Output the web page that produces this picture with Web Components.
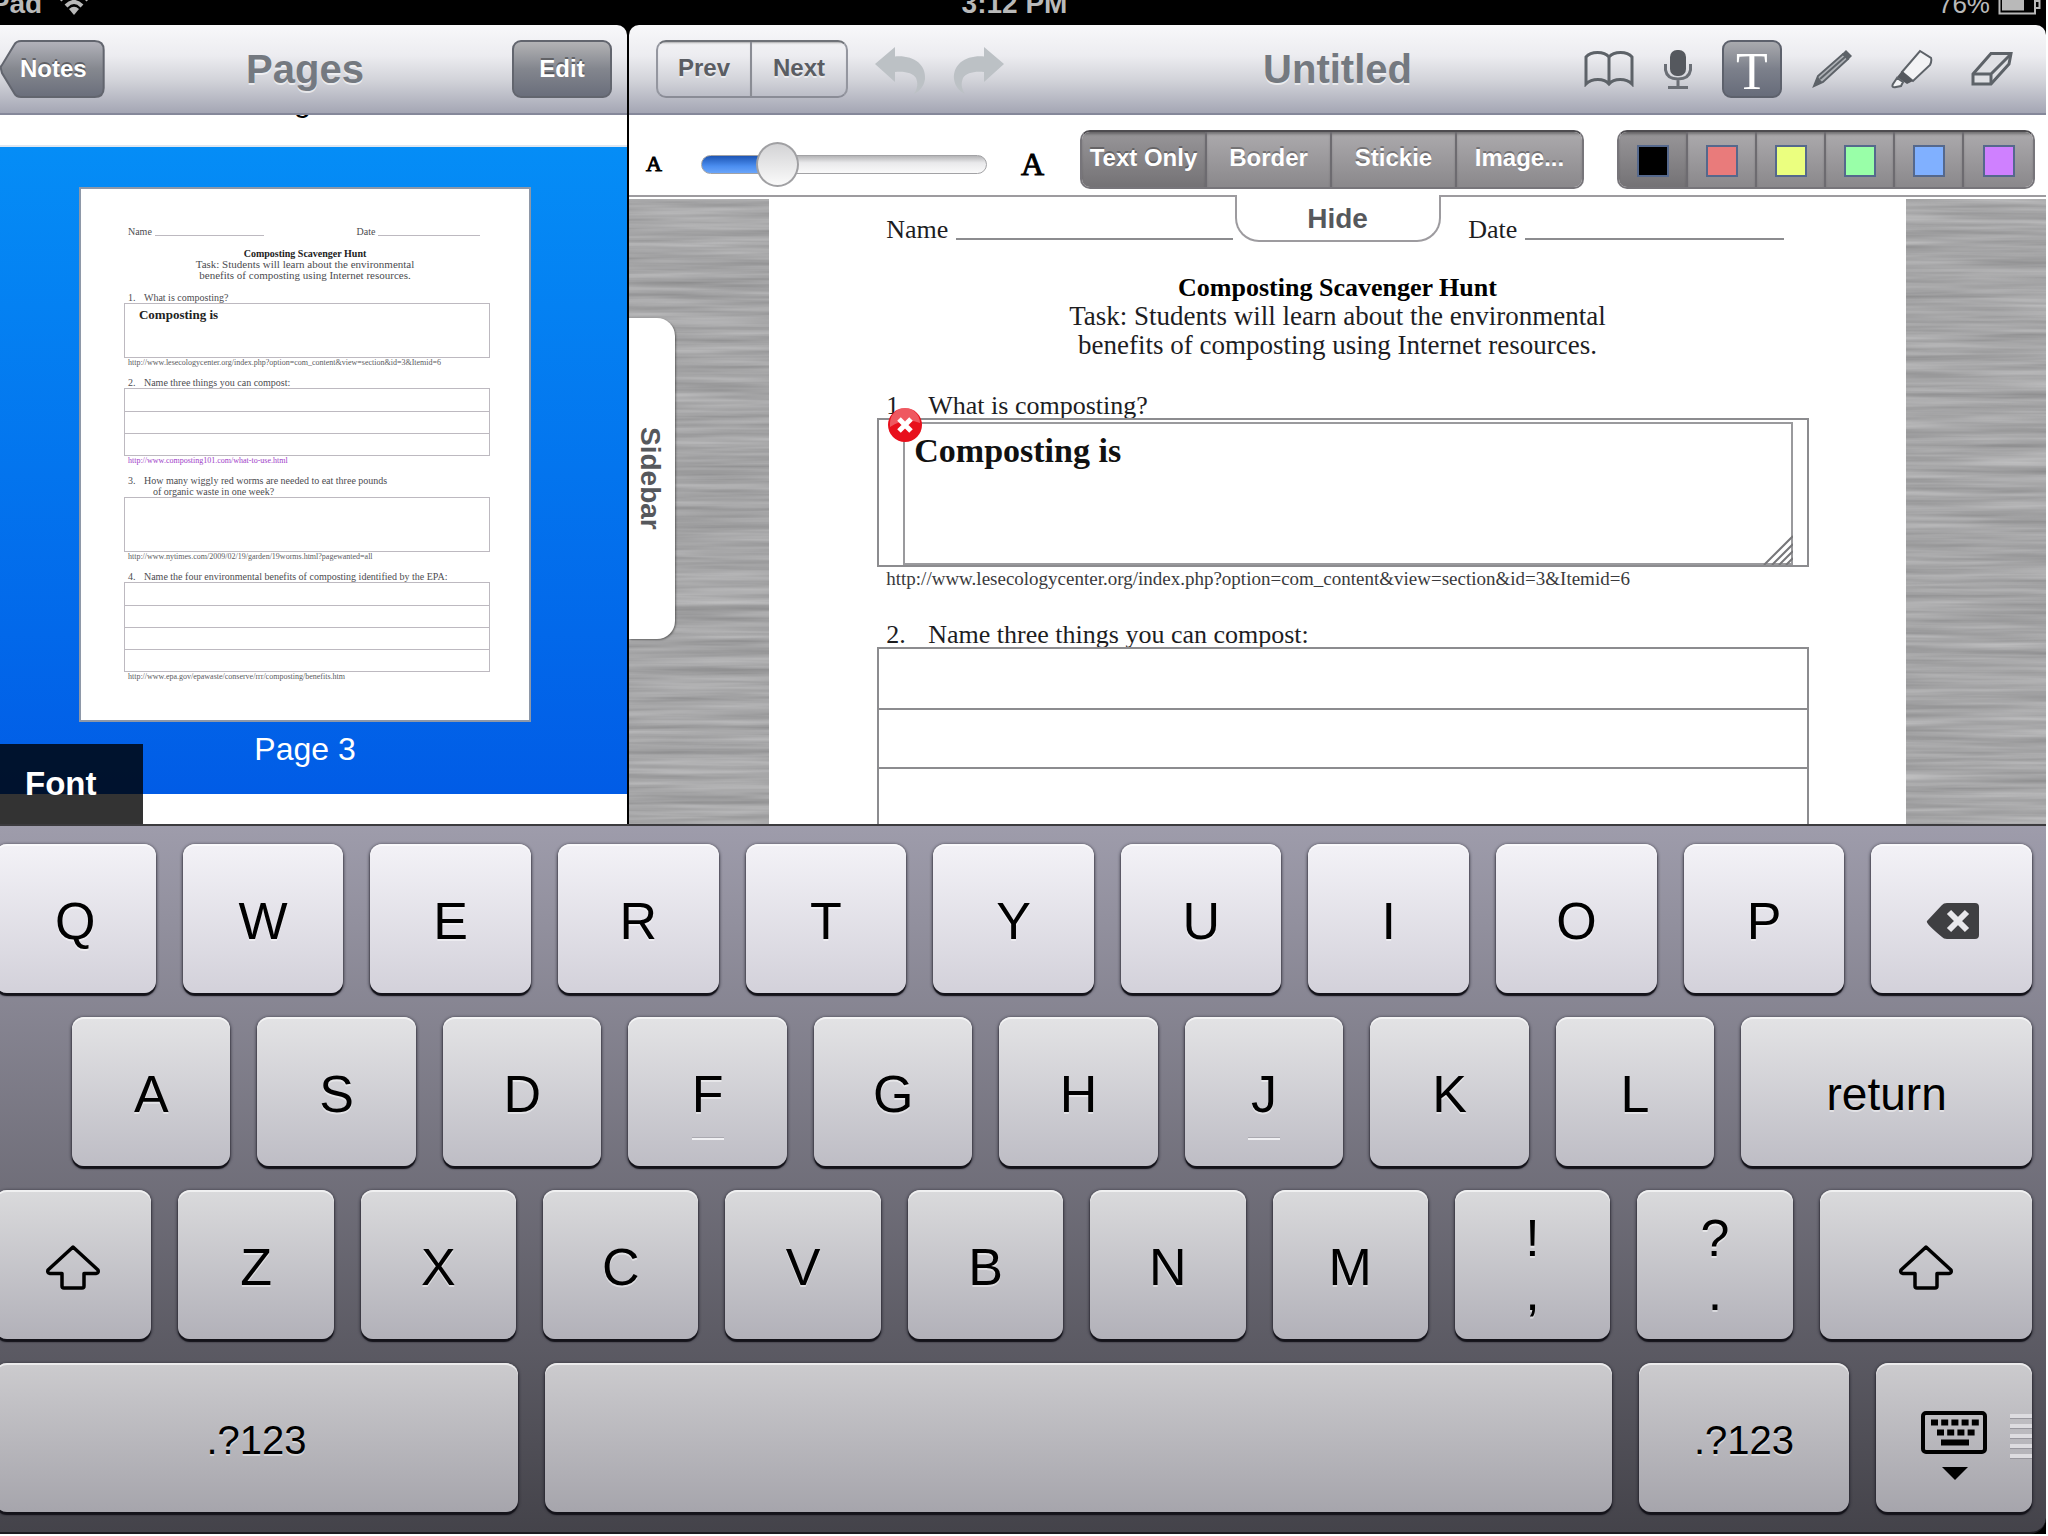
<!DOCTYPE html>
<html lang="en">
<head>
<meta charset="utf-8">
<meta name="viewport" content="width=device-width, initial-scale=1">
<title>Untitled</title>
<style>
  html, body {
    margin: 0;
    height: 100%;
    background: #fff;
    overflow: hidden;
    font-family: "Liberation Sans", Arial, sans-serif;
  }
</style>
</head>
<body>
<note-app></note-app>

<script>
const ICONS = {
  wifi: ['0 0 32 24', `
    <g fill="none" stroke="#b9b9b9" stroke-width="4">
      <path d="M2 9Q16 -4 30 9"/><path d="M8 15Q16 7 24 15"/>
    </g>
    <path d="M11 18Q16 13.500 21 18L16 24Z" fill="#b9b9b9"/>`],
  battery: ['0 0 43 20', `
    <path d="M1.500 1H37V18.500H1.500Z" fill="none" stroke="#b9b9b9" stroke-width="2"/>
    <path d="M4 3H26V15.500H4Z" fill="#b9b9b9"/>
    <path d="M38 6H41.500V13H38" fill="none" stroke="#b9b9b9" stroke-width="2"/>`],
  undo: ['0 0 51 47', `
    <path d="M0 17L20 0V9.500C38 8 51 17 50 32C49 39 45 44 39 47C43 41 43 36 41 31C38 26 30 24 20 25V35Z" fill="#bcc1c5"/>`],
  redo: ['0 0 51 47', `
    <path d="M51 17L31 0V9.500C13 8 0 17 1 32C2 39 6 44 12 47C8 41 8 36 10 31C13 26 21 24 31 25V35Z" fill="#bcc1c5"/>`],
  book: ['0 0 50 36', `
    <path d="M25 6C20 0 7 0 2 6V33C8 27 20 27 25 33C30 27 42 27 48 33V6C43 0 30 0 25 6ZM25 6V33" fill="none" stroke="#5d6268" stroke-width="3"/>`],
  mic: ['0 0 28 39', `
    <rect x="6" y="0" width="16" height="26" rx="7" fill="#55585e"/>
    <path d="M1.500 14V20Q3 29 14 29Q25 29 26.500 20V14M14 29V37M4 37.500H24" fill="none" stroke="#6a6e75" stroke-width="3"/>`],
  pencil: ['0 0 40 38', `
    <path d="M2 36L6 26L31 4L36 9L11 32Z" fill="#aeb1b6" stroke="#5d6268" stroke-width="2"/>
    <path d="M30 4L34 0L40 6L36 10Z" fill="#5d6268"/>
    <path d="M8 29L33 7" stroke="#5d6268" stroke-width="2"/>
    <path d="M2 36L6 27L10 32Z" fill="#5d6268"/>`],
  marker: ['0 0 42 40', `
    <path d="M11 23L29 2L40 9Q41 12 39 16L22 32Z" fill="#f3f3f5" stroke="#5d6268" stroke-width="2"/>
    <path d="M11 22L22 32L16 35L6 28Z" fill="#55585e"/>
    <path d="M6 29L2 35Q0 39 5 38L10 37L12 33Z" fill="#f3f3f5" stroke="#5d6268" stroke-width="2"/>`],
  eraser: ['0 0 42 34', `
    <path d="M2 22L20 1.500H40L38 12L20 32H2Z" fill="#dfe0e4" stroke="#5d6268" stroke-width="3"/>
    <path d="M2 22H20L40 2M20 22V32" fill="none" stroke="#5d6268" stroke-width="3"/>`],
  close: ['0 0 36 36', `
    <circle cx="18" cy="18" r="17" fill="#e8101c"/>
    <path d="M3 16A15 15 0 0 1 33 16Q18 10 3 20Z" fill="#fff" opacity=".3"/>
    <path d="M12 12L24 24M24 12L12 24" stroke="#fff" stroke-width="5"/>`],
  grip: ['0 0 30 30', `
    <path d="M1 30L30 1M9 30L30 9M16 30L30 16M23 30L30 23" stroke="#77777a" stroke-width="2"/>`],
  back: ['0 0 54 36', `
    <path d="M2 18L17 2Q18.500 0 22 0H50Q54 0 54 4V32Q54 36 50 36H22Q18.500 36 17 34Q0 20 2 18Z" fill="#3f3f42"/>
    <path d="M24 9L42 27M42 9L24 27" stroke="#e8e7eb" stroke-width="6"/>`],
  shift: ['0 0 56 46', `
    <path d="M28 3L53 26Q54 29 51 29.500H39V42Q39 44 37 44H19Q17 44 17 42V29.500H5Q2 29 3 26Z" fill="none" stroke="#000" stroke-width="3.500" stroke-linejoin="round"/>`],
  keyboard: ['0 0 66 70', `
    <rect x="2" y="2" width="62" height="39" rx="3" fill="none" stroke="#000" stroke-width="4"/>
    <path d="M10 11.500H58" stroke="#000" stroke-width="6" stroke-dasharray="7 3.200"/>
    <path d="M16 21.500H54" stroke="#000" stroke-width="6" stroke-dasharray="7 3.200"/>
    <path d="M20 31.500H48" stroke="#000" stroke-width="6"/>
    <path d="M21 56H47L34 69Z"/>`],
};

class AppIcon extends HTMLElement {
  constructor() {
    super();
    this.attachShadow({ mode: 'open' });
  }

  connectedCallback() {
    const [box, body] = ICONS[this.getAttribute('name')];
    const [, , w, h] = box.split(' ');
    this.shadowRoot.innerHTML = `
      <style>
        :host { display: inline-flex; flex: none; }
        svg { display: block; }
      </style>
      <svg width="${w}" height="${h}" viewBox="${box}" aria-hidden="true">${body}</svg>
    `;
  }
}

class StatusBar extends HTMLElement {
  constructor() {
    super();
    this.attachShadow({ mode: 'open' }).innerHTML = `
      <style>
        /* content is aligned to the bottom edge, the top of it runs off the window */
        :host {
          display: grid;
          grid-template-columns: 1fr auto 1fr;
          align-items: end;
          align-content: end;
          box-sizing: border-box;
          height: 25px;
          padding-bottom: 5px;
          background: #000;
          color: #b9b9b9;
          font-size: 28px;
          line-height: 32px;
          font-weight: bold;
        }
        .left, .right { display: flex; align-items: flex-end; }
        .left { gap: 16px; }
        .right {
          justify-content: flex-end;
          gap: 8px;
          padding-right: 5px;
          font-size: 26px;
          font-weight: normal;
        }
        app-icon { padding-bottom: 5px; }
      </style>
      <div class="left"><span>iPad</span><app-icon name="wifi"></app-icon></div>
      <div>3:12 PM</div>
      <div class="right"><span>76%</span><app-icon name="battery"></app-icon></div>
    `;
  }
}

// Silver navigation bar with slots on both sides of its title
class NavBar extends HTMLElement {
  constructor() {
    super();
    this.attachShadow({ mode: 'open' }).innerHTML = `
      <style>
        :host {
          display: grid;
          grid-template-columns: 1fr auto 1fr;
          align-items: center;
          box-sizing: border-box;
          flex: none;
          height: 90px;
          border-bottom: 2px solid #85889a;
          border-radius: 10px 10px 0 0;
          background: linear-gradient(#f8f8fa, #ececf0 35%, #d3d4da 62%, #a4a6b4);
        }
        h1 {
          margin: 0;
          color: #747980;
          font-size: 40px;
          line-height: 48px;
          text-shadow: 0 2px 0 rgba(255, 255, 255, .6);
        }
        div { display: flex; align-items: center; }
        .end { justify-content: flex-end; }
      </style>
      <div><slot name="start"></slot></div>
      <h1><slot></slot></h1>
      <div class="end"><slot name="end"></slot></div>
    `;
  }
}

class NavButton extends HTMLElement {
  constructor() {
    super();
    this.attachShadow({ mode: 'open' });
  }

  connectedCallback() {
    const back = this.hasAttribute('back');
    this.shadowRoot.innerHTML = `
      <style>
        :host { display: block; }
        button {
          position: relative;
          box-sizing: border-box;
          height: 58px;
          min-width: 100px;
          margin: 0;
          padding: 0 18px;
          border: 2px solid #62656e;
          border-radius: 9px;
          background: linear-gradient(#b3b3b5, #83868e 50%, #6a6e7b);
          color: #fff;
          font: bold 24px/30px "Liberation Sans", Arial, sans-serif;
          text-shadow: 0 -2px 0 rgba(0, 0, 0, .35);
        }
        :host([back]) button { border: 0; background: none; min-width: 104px; padding-left: 20px; }
        svg { position: absolute; inset: 0; width: 100%; height: 100%; }
        span { position: relative; }
      </style>
      <button type="button">
        ${back ? `
        <svg viewBox="0 0 104 58" preserveAspectRatio="none" aria-hidden="true">
          <defs>
            <linearGradient id="g" x2="0" y2="1">
              <stop stop-color="#b3b3bb"/><stop offset=".5" stop-color="#85888f"/><stop offset="1" stop-color="#6a6e7b"/>
            </linearGradient>
          </defs>
          <path d="M1 29Q0 27 2 25L14 5Q16 1 21 1H94Q103 1 103 10V48Q103 57 94 57H21Q16 57 14 53L2 33Z"
            fill="url(#g)" stroke="#62656e" stroke-width="2"/>
        </svg>` : ''}
        <span><slot></slot></span>
      </button>
    `;
  }
}

class PagesPanel extends HTMLElement {
  constructor() {
    super();
    this.attachShadow({ mode: 'open' }).innerHTML = `
      <style>
        :host {
          position: relative;
          display: flex;
          flex-direction: column;
          overflow: hidden;
          background: #000;
          font-size: 32px;
          line-height: 37px;
        }
        [slot=start] { margin-left: 17px; }
        [slot=end] { margin-right: 15px; }
        ul {
          flex: 1;
          min-height: 0;
          margin: 0;
          padding: 0;
          overflow: hidden;
          background: #fff;
          list-style: none;
          text-align: center;
        }
        /* tail end of the row scrolled under the bar */
        .before {
          display: flex;
          flex-direction: column;
          justify-content: flex-end;
          height: 4px;
          padding-bottom: 26px;
          overflow: hidden;
          border-bottom: 2px solid #dfe6f0;
        }
        .current {
          display: flex;
          flex-direction: column;
          align-items: center;
          gap: 9px;
          padding: 40px 0 26px;
          background: linear-gradient(#058df6, #015ce6);
          color: #fff;
        }
        .thumb {
          box-sizing: border-box;
          width: 70.2%;
          height: 535px;
          border: 2px solid #8e98a8;
          background: #fff;
        }
        .font {
          position: absolute;
          left: 0;
          bottom: 0;
          width: 160px;
          height: 80px;
          border: 0;
          padding: 0 0 0 42px;
          background: rgba(0, 0, 0, .8);
          color: #fff;
          font: bold 33px/40px "Liberation Sans", Arial, sans-serif;
          text-align: left;
        }
      </style>
      <nav-bar>
        <nav-button slot="start" back>Notes</nav-button>
        Pages
        <nav-button slot="end">Edit</nav-button>
      </nav-bar>
      <ul>
        <li class="before"><span>Page 2</span></li>
        <li class="current">
          <div class="thumb"><work-sheet mini></work-sheet></div>
          <span>Page 3</span>
        </li>
      </ul>
      <button class="font" type="button">Font</button>
    `;
  }
}

const QUESTIONS = [
  {
    text: 'What is composting?',
    answer: 'Composting is',
    rows: 0,
    url: 'http://www.lesecologycenter.org/index.php?option=com_content&view=section&id=3&Itemid=6',
  },
  {
    text: 'Name three things you can compost:',
    rows: 3,
    url: 'http://www.composting101.com/what-to-use.html',
    visited: true,
  },
  {
    text: 'How many wiggly red worms are needed to eat three pounds',
    more: 'of organic waste in one week?',
    rows: 0,
    url: 'http://www.nytimes.com/2009/02/19/garden/19worms.html?pagewanted=all',
  },
  {
    text: 'Name the four environmental benefits of composting identified by the EPA:',
    rows: 4,
    url: 'http://www.epa.gov/epawaste/conserve/rrr/composting/benefits.htm',
  },
];

// The worksheet, full size in the editor and small in the page list
class WorkSheet extends HTMLElement {
  constructor() {
    super();
    this.attachShadow({ mode: 'open' });
  }

  connectedCallback() {
    const mini = this.hasAttribute('mini');
    const list = mini ? QUESTIONS : QUESTIONS.slice(0, 2);
    this.shadowRoot.innerHTML = `
      <style>
        :host {
          --text: 26px;
          --task: 27px;
          --line: 29px;
          --small: 19px;
          --small-line: 24px;
          --first-gap: 31px;
          --gap: 29px;
          --question: 27px;
          --left: 108px;
          --right: 97px;
          --inset: 9px;
          --number: 42px;
          --box: 149px;
          --row: 59px;
          --rule: 2px;
          --rule-color: #8c8c8f;
          --name: 277px;
          --date: 259px;
          display: block;
          padding-top: 16px;
          color: #1d1d1f;
          font-family: "Liberation Serif", "Times New Roman", serif;
          font-size: var(--text);
          line-height: var(--line);
          text-align: left;
        }
        :host([mini]) {
          --text: 10px;
          --task: 11px;
          --line: 11px;
          --small: 8px;
          --small-line: 9px;
          --first-gap: 11px;
          --gap: 10px;
          --question: 11px;
          --left: 43px;
          --right: 39px;
          --inset: 4px;
          --number: 16px;
          --box: 55px;
          --row: 22px;
          --rule: 1px;
          --rule-color: #bdb9c0;
          --name: 109px;
          --date: 102px;
          padding-top: 37px;
          color: #4c4c50;
        }
        .fields { display: grid; grid-template-columns: 61.5% 1fr; }
        .fields span { display: flex; gap: calc(var(--inset) - 1px); }
        .fields span:first-child { padding-left: calc(var(--left) + var(--inset)); }
        .fields i { width: var(--name); margin-bottom: 4px; border-bottom: var(--rule) solid var(--rule-color); }
        :host([mini]) .fields i { margin-bottom: 1px; }
        .fields span:last-child i { width: var(--date); }
        h2, p { margin: 0; font-size: inherit; text-align: center; }
        h2 { margin-top: var(--line); color: #000; }
        p { font-size: var(--task); }
        :host([mini]) h2 { color: #222; }
        section { margin: var(--gap) var(--right) 0 var(--left); }
        p + section { margin-top: var(--first-gap); }
        .question { display: flex; height: var(--question); padding-left: var(--inset); white-space: nowrap; }
        .question b { width: var(--number); font-weight: normal; }
        .more { padding-left: 29px; }
        .box {
          position: relative;
          box-sizing: border-box;
          min-height: var(--box);
          border: var(--rule) solid var(--rule-color);
        }
        .row { box-sizing: border-box; height: var(--row); }
        .row + .row { border-top: var(--rule) solid var(--rule-color); }
        .answer { padding: 3px 0 0 14px; font-weight: bold; font-size: 13px; line-height: 15px; color: #222; }
        a {
          display: block;
          padding-left: var(--inset);
          color: #3a3a3c;
          font-size: var(--small);
          line-height: var(--small-line);
          text-decoration: none;
          white-space: nowrap;
        }
        :host([mini]) a { color: #5a5a5e; }
        a.visited, :host([mini]) a.visited { color: #a040c8; }
        .rows { min-height: 0; }
      </style>
      <div class="fields">
        <span>Name <i></i></span>
        <span>Date <i></i></span>
      </div>
      <h2>Composting Scavenger Hunt</h2>
      <p>Task: Students will learn about the environmental<br>benefits of composting using Internet resources.</p>
      ${list.map((q, i) => `
        <section>
          <div class="question"><b>${i + 1}.</b><span>${q.text}</span></div>
          ${q.more ? `<div class="more">${q.more}</div>` : ''}
          <div class="box ${q.rows ? 'rows' : ''}">
            ${'<div class="row"></div>'.repeat(q.rows)}
            ${q.answer ? (mini ? `<div class="answer">${q.answer}</div>` : `<text-note>${q.answer}</text-note>`) : ''}
          </div>
          ${mini || i === 0 ? `<a href="${q.url}" class="${q.visited ? 'visited' : ''}">${q.url.replace(/&/g, '&amp;')}</a>` : ''}
        </section>
      `).join('')}
    `;
  }
}

// Text box placed on the page, with delete and resize handles
class TextNote extends HTMLElement {
  constructor() {
    super();
    this.attachShadow({ mode: 'open' });
  }

  connectedCallback() {
    this.shadowRoot.innerHTML = `
      <style>
        :host { position: relative; display: block; margin: 2px 14px 0 24px; }
        textarea {
          display: block;
          box-sizing: border-box;
          width: 100%;
          height: 143px;
          margin: 0;
          padding: 8px 9px;
          border: 2px solid #9a9a9d;
          outline: 0;
          resize: none;
          overflow: hidden;
          background: transparent;
          color: #111;
          font: bold 34px/38px "Liberation Serif", Georgia, serif;
        }
        button {
          position: absolute;
          left: -16px;
          top: -15px;
          padding: 0;
          border: 0;
          background: none;
        }
        .grip { position: absolute; right: 0; bottom: 0; }
      </style>
      <textarea aria-label="Text note" spellcheck="false">${this.textContent}</textarea>
      <button type="button" aria-label="Delete"><app-icon name="close"></app-icon></button>
      <app-icon class="grip" name="grip"></app-icon>
    `;
  }
}

class SegmentedControl extends HTMLElement {
  constructor() {
    super();
    this.attachShadow({ mode: 'open' });
  }

  connectedCallback() {
    const colors = this.hasAttribute('colors');
    const items = this.getAttribute('items').split(',');
    this.shadowRoot.innerHTML = `
      <style>
        :host {
          display: flex;
          box-sizing: border-box;
          height: 59px;
          overflow: hidden;
          border: 2px solid #77757a;
          border-top-color: #4e4c50;
          border-radius: 10px;
        }
        button {
          display: flex;
          align-items: center;
          justify-content: center;
          box-sizing: border-box;
          width: 125px;
          margin: 0;
          padding: 0 0 2px;
          border: 0;
          border-right: 2px solid #6d6b70;
          background: linear-gradient(#acaaad, #8a888b);
          box-shadow: inset 0 3px 3px -1px rgba(0, 0, 0, .35);
          color: #fff;
          font: bold 24px/30px "Liberation Sans", Arial, sans-serif;
          text-shadow: 0 -2px 0 rgba(0, 0, 0, .3);
          white-space: nowrap;
        }
        button:last-child { border-right: 0; }
        button[aria-pressed=true] { background: linear-gradient(#989699, #747275); }
        :host([colors]) button { width: 69px; padding: 4px 0 0; }
        i { width: 28px; height: 28px; border: 2px solid #55688c; }
        :host([light]) { height: 58px; border-color: #6f7278 #94969f #8a8c96; }
        :host([light]) button {
          width: 94px;
          background: none;
          box-shadow: inset 0 2px 2px -1px rgba(0, 0, 0, .3);
          border-color: #8a8c94;
          color: #5a5d63;
          text-shadow: 0 2px 0 rgba(255, 255, 255, .5);
        }
      </style>
      ${items.map((item, i) => `
        <button type="button" aria-pressed="${i === 0}" ${colors ? `aria-label="Color ${i + 1}"` : ''}>${
          colors ? `<i style="background: ${item}"></i>` : item
        }</button>
      `).join('')}
    `;
  }
}

class SizeSlider extends HTMLElement {
  constructor() {
    super();
    this.attachShadow({ mode: 'open' }).innerHTML = `
      <style>
        :host {
          display: flex;
          align-items: center;
          color: #000;
          font-family: "Liberation Serif", serif;
        }
        label, span { -webkit-text-stroke: 1px #000; }
        label { font-size: 22px; line-height: 26px; }
        span { font-size: 32px; line-height: 40px; }
        input {
          width: 286px;
          height: 46px;
          margin: 0 34px 0 39px;
          appearance: none;
          background: none;
        }
        input::-webkit-slider-runnable-track {
          box-sizing: border-box;
          height: 19px;
          border: 1px solid #a2a2a5;
          border-radius: 10px;
          background:
            linear-gradient(#1d56b5, #4b8ef0 60%, #6aa5fa) 0 0 / 70px 100% no-repeat,
            linear-gradient(#b4b4b6, #e9e9eb 40%, #fafafa);
        }
        input::-webkit-slider-thumb {
          appearance: none;
          box-sizing: border-box;
          width: 43px;
          height: 45px;
          margin-top: -14px;
          border: 2px solid #a0a0a3;
          border-radius: 50%;
          background: linear-gradient(#d3d3d5, #fafafa);
        }
      </style>
      <label for="size">A</label>
      <input id="size" type="range" min="0" max="1000" value="225">
      <span>A</span>
    `;
  }
}

class ToolIcon extends HTMLElement {
  constructor() {
    super();
    this.attachShadow({ mode: 'open' });
  }

  connectedCallback() {
    const name = this.getAttribute('name');
    this.shadowRoot.innerHTML = `
      <style>
        :host { display: flex; justify-content: center; width: 80px; }
        :host([narrow]) { width: 69px; }
        button {
          display: flex;
          align-items: center;
          justify-content: center;
          box-sizing: border-box;
          height: 58px;
          min-width: 60px;
          margin: 0;
          padding: 0;
          border: 0;
          background: none;
        }
        :host([active]) button {
          padding-top: 5px;
          border: 2px solid #5d616c;
          border-radius: 9px;
          background: linear-gradient(#a9aaae, #7c808b 50%, #676c7a);
          color: #fff;
          font: 52px/52px "Liberation Serif", serif;
        }
        :host([start]) { width: auto; }
        :host([start]) button { min-width: 0; padding-top: 2px; }
      </style>
      <button type="button" aria-label="${name}">${ICONS[name] ? `<app-icon name="${name}"></app-icon>` : '<slot></slot>'}</button>
    `;
  }
}

class EditorPanel extends HTMLElement {
  constructor() {
    super();
    this.attachShadow({ mode: 'open' }).innerHTML = `
      <style>
        :host {
          display: flex;
          flex-direction: column;
          overflow: hidden;
          background: #000;
        }
        .start { display: flex; align-items: center; gap: 27px; padding-left: 27px; }
        .end { display: flex; padding-right: 14px; }
        .tools {
          position: relative;
          z-index: 1;
          display: flex;
          align-items: center;
          justify-content: space-between;
          flex: none;
          box-sizing: border-box;
          height: 82px;
          padding: 8px 11px 0 17px;
          border-bottom: 2px solid #9d9b9f;
          background: #fff;
        }
        .tools segmented-control[colors] { margin-left: 33px; }
        size-slider { margin-right: auto; padding-top: 10px; }
        .hide {
          position: absolute;
          top: 100%;
          left: 50%;
          box-sizing: border-box;
          width: 206px;
          height: 47px;
          margin-left: -103px;
          padding: 2px 0 0;
          border: 2px solid #9d9b9f;
          border-top: 0;
          border-radius: 0 0 24px 24px;
          background: #fff;
        }
        .canvas {
          position: relative;
          display: flex;
          justify-content: center;
          flex: 1;
          min-height: 0;
          overflow: hidden;
          border-top: 2px solid #fff;
          background: #a6a6a8;
        }
        .metal { position: absolute; inset: 0; width: 100%; height: 100%; }
        work-sheet {
          position: relative;
          flex: none;
          box-sizing: border-box;
          width: 80.2%;
          background: #fff;
        }
        .hide, .side {
          color: #56585c;
          font: bold 28px/32px "Liberation Sans", Arial, sans-serif;
        }
        .side {
          position: absolute;
          left: 0;
          top: 119px;
          width: 46px;
          height: 321px;
          padding: 0 4px 0 0;
          border: 0;
          border-radius: 0 18px 18px 0;
          background: #fff;
          box-shadow: 1px 1px 2px rgba(0, 0, 0, .4);
          writing-mode: vertical-rl;
        }
      </style>
      <nav-bar>
        <div class="start" slot="start">
          <segmented-control light items="Prev,Next"></segmented-control>
          <tool-icon start name="undo"></tool-icon>
          <tool-icon start name="redo"></tool-icon>
        </div>
        Untitled
        <div class="end" slot="end">
          <tool-icon narrow name="book"></tool-icon>
          <tool-icon narrow name="mic"></tool-icon>
          <tool-icon active name="Text">T</tool-icon>
          <tool-icon name="pencil"></tool-icon>
          <tool-icon name="marker"></tool-icon>
          <tool-icon name="eraser"></tool-icon>
        </div>
      </nav-bar>
      <div class="tools">
        <size-slider></size-slider>
        <segmented-control items="Text Only,Border,Stickie,Image..."></segmented-control>
        <segmented-control colors items="#000,#e97b7b,#ebff7f,#99ffa8,#80b0ff,#cf80ff"></segmented-control>
        <button class="hide" type="button">Hide</button>
      </div>
      <div class="canvas">
        <svg class="metal" aria-hidden="true">
          <filter id="brush" x="0" y="0" width="100%" height="100%" color-interpolation-filters="sRGB">
            <feTurbulence type="fractalNoise" baseFrequency=".006 .16" numOctaves="3" seed="7"/>
            <feColorMatrix values=".24 0 0 0 .53  .24 0 0 0 .53  .24 0 0 0 .535  0 0 0 0 1"/>
          </filter>
          <rect width="100%" height="100%" filter="url(#brush)"/>
        </svg>
        <work-sheet></work-sheet>
        <button class="side" type="button">Sidebar</button>
      </div>
    `;
  }
}

class KeyCap extends HTMLElement {
  constructor() {
    super();
    this.attachShadow({ mode: 'open' });
  }

  connectedCallback() {
    const icon = this.getAttribute('icon');
    const label = this.getAttribute('label') || '';
    const upper = this.getAttribute('upper');
    this.shadowRoot.innerHTML = `
      <style>
        :host { display: block; min-width: 0; }
        button {
          position: relative;
          display: flex;
          flex-direction: column;
          align-items: center;
          justify-content: center;
          box-sizing: border-box;
          width: 100%;
          height: 149px;
          margin: 0;
          padding: 4px 0 0;
          border: 0;
          border-radius: 12px;
          background: linear-gradient(var(--key-top), var(--key-bottom));
          box-shadow:
            inset 0 2px 0 rgba(255, 255, 255, .6),
            0 3px 1px #14131a,
            0 1px 3px 1px rgba(20, 20, 30, .6);
          color: #000;
          font: 52px/50px "Liberation Sans", Arial, sans-serif;
          text-shadow: 0 2px 0 rgba(255, 255, 255, .45);
        }
        .word { font-size: 46px; }
        .mode { font-size: 40px; }
        .double { padding: 0; line-height: 54px; }
        .mark {
          position: absolute;
          bottom: 26px;
          width: 32px;
          height: 2px;
          background: #f0f0f3;
          box-shadow: 0 -1px 0 #aaa9b0;
        }
        .down { padding-top: 16px; }
        .ridges {
          position: absolute;
          right: 0;
          top: 51px;
          width: 22px;
          height: 46px;
          background: repeating-linear-gradient(#dddce0 0 4px, #98979e 4px 5px, transparent 5px 10px);
        }
      </style>
      <button type="button" class="${this.getAttribute('kind') || ''}" ${label ? '' : `aria-label="${icon || 'space'}"`}>
        ${upper ? `<span>${upper}</span>` : ''}
        ${icon ? `<app-icon name="${icon}"></app-icon>` : `<span>${label}</span>`}
        ${label === 'F' || label === 'J' ? '<i class="mark"></i>' : ''}
        ${icon === 'keyboard' ? '<i class="ridges"></i>' : ''}
      </button>
    `;
  }
}

const letters = (text, width) => [...text].map((label) => ({ label, width }));

const ROWS = [
  {
    colors: ['#f3f2f7', '#d3d1da'],
    keys: [...letters('QWERTYUIOP', 160), { icon: 'back', width: 160 }],
  },
  {
    indent: 77,
    colors: ['#e3e3e5', '#bebdc5'],
    keys: [...letters('ASDFGHJKL', 158), { label: 'return', kind: 'word', width: 290 }],
  },
  {
    colors: ['#dadadc', '#b2b1b9'],
    keys: [
      { icon: 'shift', width: 156 },
      ...letters('ZXCVBNM', 155),
      { upper: '!', label: ',', kind: 'double', width: 155 },
      { upper: '?', label: '.', kind: 'double', width: 155 },
      { icon: 'shift', width: 212 },
    ],
  },
  {
    colors: ['#cccbce', '#a6a5ac'],
    keys: [
      { label: '.?123', kind: 'mode', width: 523 },
      { width: 1067 },
      { label: '.?123', kind: 'mode', width: 210 },
      { icon: 'keyboard', kind: 'down', width: 156 },
    ],
  },
];

class SoftKeyboard extends HTMLElement {
  constructor() {
    super();
    this.attachShadow({ mode: 'open' });
  }

  connectedCallback() {
    this.shadowRoot.innerHTML = `
      <style>
        :host {
          display: flex;
          flex-direction: column;
          gap: 24px;
          padding: 18px 14px 20px 12px;
          border-top: 2px solid #3c3b3e;
          border-bottom: 2px solid #1c1b20;
          border-radius: 0 0 16px 0;
          background: linear-gradient(#9e9cab, #44434a);
        }
        .row { display: flex; gap: 27px; }
      </style>
      ${ROWS.map((row) => `
        <div class="row" style="padding-left: ${row.indent || 0}px; --key-top: ${row.colors[0]}; --key-bottom: ${row.colors[1]}">
          ${row.keys.map(({ width, ...attrs }) => `
            <key-cap style="flex: ${width} 0 0" ${Object.entries(attrs).map(([k, v]) => `${k}="${v}"`).join(' ')}></key-cap>
          `).join('')}
        </div>
      `).join('')}
    `;
  }
}

class NoteApp extends HTMLElement {
  constructor() {
    super();
    this.attachShadow({ mode: 'open' }).innerHTML = `
      <style>
        /* the screen runs a little past the left edge of the window */
        :host {
          display: grid;
          grid-template-rows: auto minmax(0, 1fr) auto;
          height: calc(100vh - 2px);
          margin: 0 2px 0 -17px;
          background: #000;
        }
        main {
          display: grid;
          grid-template-columns: minmax(0, 644fr) minmax(0, 1417fr);
          gap: 2px;
        }
      </style>
      <status-bar></status-bar>
      <main>
        <pages-panel></pages-panel>
        <editor-panel></editor-panel>
      </main>
      <soft-keyboard></soft-keyboard>
    `;
  }
}

customElements.define('app-icon', AppIcon);
customElements.define('status-bar', StatusBar);
customElements.define('nav-bar', NavBar);
customElements.define('nav-button', NavButton);
customElements.define('text-note', TextNote);
customElements.define('work-sheet', WorkSheet);
customElements.define('pages-panel', PagesPanel);
customElements.define('segmented-control', SegmentedControl);
customElements.define('size-slider', SizeSlider);
customElements.define('tool-icon', ToolIcon);
customElements.define('editor-panel', EditorPanel);
customElements.define('key-cap', KeyCap);
customElements.define('soft-keyboard', SoftKeyboard);
customElements.define('note-app', NoteApp);
</script>
</body>
</html>
